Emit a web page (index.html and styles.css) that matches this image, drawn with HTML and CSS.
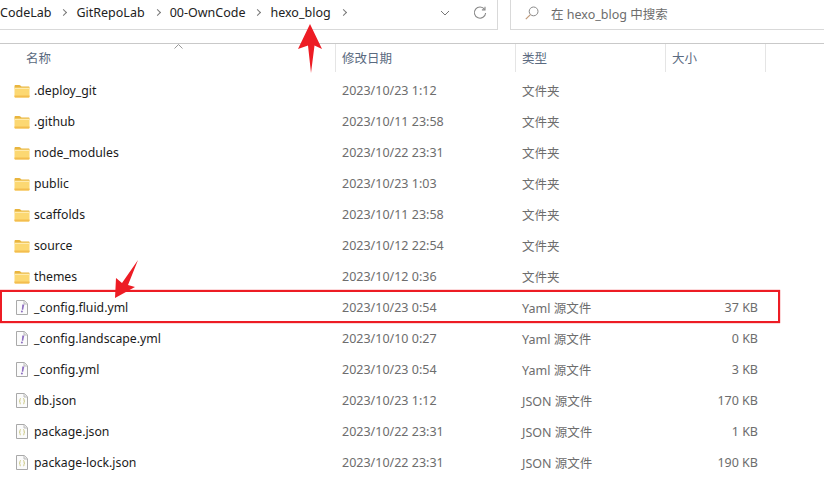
FILE: index.html
```html
<!DOCTYPE html>
<html lang="zh-CN">
<head>
  <meta charset="UTF-8" />
  <title>hexo_blog</title>
  <link rel="stylesheet" href="styles.css">
</head>
<body>
  <svg class="defs" width="0" height="0">
    <defs>
      <symbol id="folder" viewBox="0 0 16 14">
        <path d="M0.5 2.2c0-.7.5-1.200 1.200-1.200h3.600c.5 0 .8.2 1.100.5l1.100 1.100h7.300c.4 0 .7.3.7.7v1.200H.5z" fill="#e9b53e"/>
        <path d="M.5 3.800h15v8.700c0 .6-.4 1-1 1h-13c-.6 0-1-.4-1-1z" fill="#fcd872"/>
        <path d="M.5 3.800h15v1H.5z" fill="#fff0bd"/>
        <path d="M.5 11.500h15v1c0 .6-.4 1-1 1h-13c-.6 0-1-.4-1-1z" fill="#f3bd4f"/>
      </symbol>
      <symbol id="yaml" viewBox="0 0 12 15">
        <path d="M.5.5h7.800l3.200 3.200v10.800H.5z" fill="#fbfbfb" stroke="#a9a9a9"/>
        <path d="M8 .8v3.200h3.200" fill="#e8e8e8" stroke="#bdbdbd"/>
        <path d="M6.300 4.500h2L7.200 9.800H5.800z" fill="#8e6fc0"/>
        <circle cx="5.900" cy="11.400" r="1" fill="#8e6fc0"/>
      </symbol>
      <symbol id="json" viewBox="0 0 12 15">
        <path d="M.5.5h7.800l3.200 3.200v10.800H.5z" fill="#fbfbfb" stroke="#a9a9a9"/>
        <path d="M8 .8v3.200h3.200" fill="#e8e8e8" stroke="#bdbdbd"/>
        <path d="M4.800 5.500c-1 0-.8.8-.8 1.600s-.2 1-.8 1.100c.6.1.8.3.8 1.100s-.2 1.600.8 1.600M7.200 5.500c1 0 .8.8.8 1.600s.2 1 .8 1.100c-.6.1-.8.3-.8 1.100s.2 1.600-.8 1.600" fill="none" stroke="#c9c77e"/>
      </symbol>
    </defs>
  </svg>

  <div class="toolbar">
    <div class="address">
      <div class="crumbs">
        <span>CodeLab</span><i class="sep"></i>
        <span>GitRepoLab</span><i class="sep"></i>
        <span>00-OwnCode</span><i class="sep"></i>
        <span>hexo_blog</span><i class="sep"></i>
      </div>
      <svg class="chevron" width="10" height="6" viewBox="0 0 10 6"><path d="M1 1l4 4 4-4" fill="none" stroke="#777"/></svg>
      <svg class="refresh" width="14" height="14" viewBox="0 0 14 14"><path d="M11.600 3.400A5.600 5.600 0 1 0 12.600 7" fill="none" stroke="#888" stroke-width="1.100"/><path d="M12 .8v3.100H8.900" fill="none" stroke="#888" stroke-width="1.100"/></svg>
    </div>
    <div class="search">
      <svg width="14" height="14" viewBox="0 0 14 14"><circle cx="8.600" cy="5.400" r="4.400" fill="none" stroke="#8a8a8a"/><path d="M5.400 8.600L.8 13.200" stroke="#c09a7a" stroke-width="1.200"/></svg>
      <span>在 hexo_blog 中搜索</span>
    </div>
  </div>

  <div class="head">
    <div class="col-name">名称<svg class="caret" width="9" height="5" viewBox="0 0 9 5"><path d="M.5 4.500l4-4 4 4" fill="none" stroke="#999"/></svg></div>
    <div class="col-date">修改日期</div>
    <div class="col-type">类型</div>
    <div class="col-size">大小</div>
  </div>

  <div class="list">
    <div class="row"><div class="name"><svg class="ico-folder"><use href="#folder"/></svg>.deploy_git</div><div class="date">2023/10/23 1:12</div><div class="type">文件夹</div><div class="size"></div></div>
    <div class="row"><div class="name"><svg class="ico-folder"><use href="#folder"/></svg>.github</div><div class="date">2023/10/11 23:58</div><div class="type">文件夹</div><div class="size"></div></div>
    <div class="row"><div class="name"><svg class="ico-folder"><use href="#folder"/></svg>node_modules</div><div class="date">2023/10/22 23:31</div><div class="type">文件夹</div><div class="size"></div></div>
    <div class="row"><div class="name"><svg class="ico-folder"><use href="#folder"/></svg>public</div><div class="date">2023/10/23 1:03</div><div class="type">文件夹</div><div class="size"></div></div>
    <div class="row"><div class="name"><svg class="ico-folder"><use href="#folder"/></svg>scaffolds</div><div class="date">2023/10/11 23:58</div><div class="type">文件夹</div><div class="size"></div></div>
    <div class="row"><div class="name"><svg class="ico-folder"><use href="#folder"/></svg>source</div><div class="date">2023/10/12 22:54</div><div class="type">文件夹</div><div class="size"></div></div>
    <div class="row"><div class="name"><svg class="ico-folder"><use href="#folder"/></svg>themes</div><div class="date">2023/10/12 0:36</div><div class="type">文件夹</div><div class="size"></div></div>
    <div class="row"><div class="name"><svg class="ico-file"><use href="#yaml"/></svg>_config.fluid.yml</div><div class="date">2023/10/23 0:54</div><div class="type">Yaml 源文件</div><div class="size">37 KB</div></div>
    <div class="row"><div class="name"><svg class="ico-file"><use href="#yaml"/></svg>_config.landscape.yml</div><div class="date">2023/10/10 0:27</div><div class="type">Yaml 源文件</div><div class="size">0 KB</div></div>
    <div class="row"><div class="name"><svg class="ico-file"><use href="#yaml"/></svg>_config.yml</div><div class="date">2023/10/23 0:54</div><div class="type">Yaml 源文件</div><div class="size">3 KB</div></div>
    <div class="row"><div class="name"><svg class="ico-file"><use href="#json"/></svg>db.json</div><div class="date">2023/10/23 1:12</div><div class="type">JSON 源文件</div><div class="size">170 KB</div></div>
    <div class="row"><div class="name"><svg class="ico-file"><use href="#json"/></svg>package.json</div><div class="date">2023/10/22 23:31</div><div class="type">JSON 源文件</div><div class="size">1 KB</div></div>
    <div class="row"><div class="name"><svg class="ico-file"><use href="#json"/></svg>package-lock.json</div><div class="date">2023/10/22 23:31</div><div class="type">JSON 源文件</div><div class="size">190 KB</div></div>
  </div>

  <!-- red annotations drawn on top of the screenshot -->
  <div class="mark-box"></div>
  <svg class="mark-up" width="24" height="50" viewBox="0 0 24 50"><path d="M12 0L24 25 16.500 21.500 13 49 10 21.500 0 25z" fill="#ed1c24"/></svg>
  <svg class="mark-down" width="26" height="40" viewBox="0 0 26 40"><path d="M24 1L8 24 2 19 1 39 21 28 14 26z" fill="#ed1c24"/></svg>
</body>
</html>
```
FILE: styles.css
```css
html, body {
  height: 100%;
}
body {
  position: relative;
  margin: 0;
  width: 824px;
  height: 496px;
  overflow: hidden;
  background-color: #fff;
  color: #1a1a1a;
  font-family: "Noto Sans", "Noto Sans CJK SC", sans-serif;
  font-size: 12.500px;
}
.defs {
  position: absolute;
}
.toolbar {
  display: flex;
  justify-content: space-between;
  height: 30px;
}
.address {
  display: flex;
  align-items: center;
  width: 497px;
  height: 25px;
  padding-bottom: 4px;
  border-right: 1px solid #d9d9d9;
  border-bottom: 1px solid #d9d9d9;
}
.crumbs {
  display: flex;
  align-items: center;
  flex: 1;
  color: #222;
}
.sep {
  width: 4px;
  height: 4px;
  margin: 0 10px;
  border-top: 1px solid #777;
  border-right: 1px solid #777;
  transform: rotate(45deg);
}
.chevron {
  margin-right: 23px;
}
.refresh {
  margin-right: 10px;
}
.search {
  display: flex;
  align-items: center;
  gap: 12px;
  width: 299px;
  height: 26px;
  padding-left: 14px;
  padding-bottom: 3px;
  border-left: 1px solid #d9d9d9;
  border-bottom: 1px solid #d9d9d9;
  color: #6d6d6d;
}
.head {
  display: grid;
  grid-template-columns: 336px 180px 150px 100px;
  height: 28px;
  margin-top: 13px;
  border-top: 1px solid #c9c9c9;
  color: #5a6a80;
}
.head > div {
  display: flex;
  align-items: center;
  padding-bottom: 2px;
  padding-left: 6px;
  border-right: 1px solid #e5e5e5;
}
.head .col-name {
  position: relative;
  padding-left: 26px;
}
.caret {
  position: absolute;
  left: 174px;
  top: 0;
}
.list {
  padding-top: 3px;
}
.row {
  display: grid;
  grid-template-columns: 336px 180px 150px 92px;
  align-items: center;
  height: 31px;
  color: #6d6d6d;
}
.name {
  display: flex;
  align-items: center;
  color: #1a1a1a;
  padding-left: 15px;
  font-size: 12.250px;
}
.date, .type {
  padding-left: 6px;
}
.type {
  padding-bottom: 1px;
}
.size {
  text-align: right;
}
.ico-folder {
  width: 16px;
  height: 14px;
  margin-left: -1px;
  margin-right: 4px;
}
.ico-file {
  width: 12px;
  height: 15px;
  margin-left: 1px;
  margin-right: 6px;
}
.mark-box {
  position: absolute;
  left: 0;
  top: 290px;
  width: 776px;
  height: 29px;
  border: 2px solid #ed1c24;
  box-shadow: 0 0 1px #ed1c24;
}
.mark-up {
  position: absolute;
  left: 298px;
  top: 24px;
}
.mark-down {
  position: absolute;
  left: 114px;
  top: 259px;
}
```
